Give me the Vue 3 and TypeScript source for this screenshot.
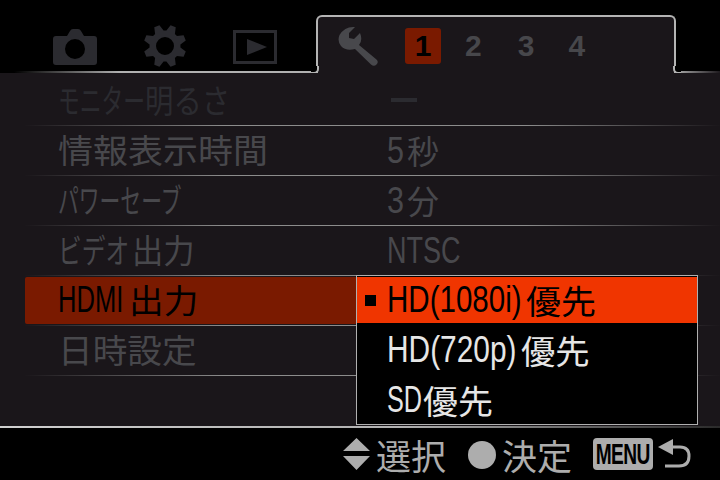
<script setup lang="ts">
interface Seg { t: string; w?: number; s?: number; latin?: boolean }
interface Row { id: string; label: Seg[]; value: Seg[]; dim?: boolean; active?: boolean; size?: string }

const rows: Row[] = [
  { id: 'a', dim: true, size: 'small', label: [{ t: 'モニター', w: 87, s: 0.66 }, { t: '明るさ', w: 82, s: 0.86 }], value: [] },
  { id: 'b', label: [{ t: '情報表示時間', w: 212, s: 1.06 }], value: [{ t: '5', latin: true, w: 20, s: 0.85 }, { t: '秒', w: 30, s: 0.97 }] },
  { id: 'c', size: 'small', label: [{ t: 'パワーセーブ', w: 122, s: 0.63 }], value: [{ t: '3', latin: true, w: 20, s: 0.85 }, { t: '分', w: 30, s: 0.97 }] },
  { id: 'd', label: [{ t: 'ビデオ', w: 74, s: 0.72 }, { t: '出力', w: 62, s: 0.95 }], value: [{ t: 'NTSC', latin: true, w: 73, s: 0.75 }] },
  { id: 'e', active: true, label: [{ t: 'HDMI', latin: true, w: 71, s: 0.71 }, { t: '出力', w: 68, s: 1.05 }], value: [] },
  { id: 'f', label: [{ t: '日時設定', w: 140, s: 1.05 }], value: [] },
]
const options: { id: string; label: Seg[]; selected?: boolean }[] = [
  { id: 'o1', selected: true, label: [{ t: 'HD(1080i)', latin: true, w: 139, s: 0.82 }, { t: '優先', w: 68, s: 1.06 }] },
  { id: 'o2', label: [{ t: 'HD(720p)', latin: true, w: 134, s: 0.83 }, { t: '優先', w: 66, s: 1.04 }] },
  { id: 'o3', label: [{ t: 'SD', latin: true, w: 36, s: 0.7 }, { t: '優先', w: 70, s: 1.06 }] },
]
const segStyle = (s: Seg) => (s.w ? { width: s.w + 'px', transform: `scaleX(${s.s})` } : {})

const gear = (() => {
  const pts: string[] = []
  const cx = 21, cy = 21
  for (let i = 0; i < 8; i++) {
    const a = ((i + 0.5) * Math.PI) / 4 - Math.PI / 2
    const p = (r: number, d: number) => `${(cx + r * Math.cos(a + d)).toFixed(2)} ${(cy + r * Math.sin(a + d)).toFixed(2)}`
    pts.push(p(15.5, -0.3), p(21.5, -0.13), p(21.5, 0.13), p(15.5, 0.3))
  }
  return `M${pts.join('L')}Z M${cx + 9} ${cy}A9 9 0 1 0 ${cx - 9} ${cy}A9 9 0 1 0 ${cx + 9} ${cy}Z`
})()
</script>

<template>
  <div class="screen">
    <header class="tabs">
      <div class="inactive">
        <svg class="i-camera" width="44" height="36" viewBox="0 0 44 36">
          <path fill-rule="evenodd" fill="#2b2b30" d="M3 7h11l3-5q1-2 3-2h5q2 0 3 2l3 5h10q3 0 3 3v23q0 3-3 3H3q-3 0-3-3V10q0-3 3-3ZM32 20a10 10 0 1 0-20 0a10 10 0 1 0 20 0Z" />
        </svg>
        <svg class="i-gear" width="42" height="42" viewBox="0 0 42 42"><path fill="#2b2b30" fill-rule="evenodd" :d="gear" /></svg>
        <svg class="i-play" width="44" height="34" viewBox="0 0 44 34">
          <rect x="1.5" y="1.500" width="41" height="31" fill="none" stroke="#2b2b30" stroke-width="3" />
          <path d="M14 9l20 8l-20 8Z" fill="#2b2b30" />
        </svg>
      </div>
      <div class="tab">
        <svg class="i-wrench" width="41" height="41" viewBox="0 0 41 41">
          <path fill="#48484c" d="M17 1L11 7L11 12L16 13L22 7Q25 14 21 19L38.500 33.500Q41 36 38.500 38.500Q36 41 33 38.500L17 23Q8 25.500 3 20Q-1 15 1.500 9Q7 0 17 1Z" />
        </svg>
        <span class="num on">1</span>
        <span class="num n2">2</span>
        <span class="num n3">3</span>
        <span class="num n4">4</span>
      </div>
      <div class="tail"></div>
    </header>

    <main class="panel">
      <div v-for="r in rows" :key="r.id" class="row" :class="{ dim: r.dim, active: r.active }">
        <div class="inner">
          <span class="label">
            <span v-for="s in r.label" :key="s.t" class="seg" :class="{ latin: s.latin }" :style="segStyle(s)">{{ s.t }}</span>
          </span>
          <span class="value">
            <span v-if="r.dim" class="dash"></span>
            <span v-for="s in r.value" :key="s.t" class="seg" :class="{ latin: s.latin }" :style="segStyle(s)">{{ s.t }}</span>
          </span>
        </div>
      </div>
      <div class="menu">
        <div v-for="o in options" :key="o.id" class="opt" :class="{ sel: o.selected }">
          <span class="mark"></span>
          <span v-for="s in o.label" :key="s.t" class="seg" :class="{ latin: s.latin }" :style="segStyle(s)">{{ s.t }}</span>
        </div>
      </div>
    </main>

    <footer class="foot">
      <svg class="updown" width="27" height="32" viewBox="0 0 27 32">
        <path d="M13.500 0L27 13H0Z M0 18H27L13.500 32Z" fill="#adadad" />
      </svg>
      <span class="ft">選択</span>
      <span class="dot"></span>
      <span class="ft">決定</span>
      <span class="menu-key"><span class="menu-text">MENU</span></span>
      <svg class="ret" width="34" height="32" viewBox="0 0 34 32">
        <path d="M1 9L16 1V17Z" fill="#adadad" />
        <path d="M12 9H23Q32 9 32 18Q32 28 22 28H8" fill="none" stroke="#adadad" stroke-width="3" />
      </svg>
    </footer>
  </div>
</template>

<style scoped>
.screen {
  width: 720px;
  height: 480px;
  background: #000;
  display: flex;
  flex-direction: column;
  overflow: hidden;
  font-family: "Noto Sans CJK JP", "Liberation Sans", sans-serif;
}
.tabs {
  height: 73px;
  display: flex;
  flex: none;
}
.inactive {
  width: 316px;
  flex: none;
  display: flex;
  align-items: flex-start;
  position: relative;
  border-bottom: 2px solid transparent;
  border-image: linear-gradient(90deg, #000 15px, #b0b0b0 120px) 1;
}
.i-camera { margin: 29px 0 0 53px; }
.i-gear { margin: 25px 0 0 47px; }
.i-play { margin: 30px 0 0 47px; }
.tab {
  width: 360px;
  height: 59px;
  margin-top: 15px;
  flex: none;
  box-sizing: border-box;
  background: #1a161a;
  border: 2px solid #b4b4b4;
  border-bottom: 0;
  border-radius: 6px 6px 0 0;
  display: flex;
  align-items: flex-start;
  padding: 9px 0 0 20px;
  position: relative;
}
.tab::before, .tab::after {
  content: "";
  position: absolute;
  bottom: 0;
  width: 6px;
  height: 6px;
  border-bottom: 2px solid #b4b4b4;
}
.tab::before { left: -7px; border-right: 2px solid #b4b4b4; border-bottom-right-radius: 5px; background: #000; }
.tab::after { right: -7px; border-left: 2px solid #b4b4b4; border-bottom-left-radius: 5px; background: #000; }
.tail {
  flex: 1;
  border-bottom: 2px solid transparent;
  border-image: linear-gradient(90deg, #b0b0b0, #1a161a) 1;
}
.num {
  font-family: "Liberation Sans", sans-serif;
  font-weight: 700;
  font-size: 30px;
  line-height: 36px;
  height: 36px;
  margin-top: 2px;
  color: #47474b;
  text-align: center;
}
.num.on {
  width: 36px;
  margin-left: 26px;
  background: #7a1a00;
  color: #000;
  border-radius: 3px;
}
.n2 { margin-left: 24px; }
.n3 { margin-left: 36px; }
.n4 { margin-left: 34px; }
.panel {
  position: relative;
  flex: none;
  height: 353px;
  background: #1a161a;
  box-sizing: border-box;
  padding: 3px 0 0 25px;
}
.row {
  height: 50px;
  box-sizing: border-box;
  border-bottom: 1px solid transparent;
  border-image: linear-gradient(90deg, #1a161a, #8c8c8c 200px, #8c8c8c 500px, #1a161a) 1;
  padding-top: 1px;
}
.inner {
  height: 47px;
  display: flex;
  align-items: center;
  color: #48484c;
  font-size: 33px;
  line-height: 45px;
  white-space: nowrap;
  border-radius: 2px;
}
.active .inner { background: #7a1a00; color: #000; width: 332px; }
.dim .inner { color: #2b2b30; }
.label {
  width: 362px;
  height: 47px;
  box-sizing: border-box;
  padding-left: 33px;
  flex: none;
  display: inline-flex;
}
.value { display: inline-flex; align-items: center; height: 47px; }
.dash { width: 26px; height: 4px; background: #2b2b30; margin: 0 0 2px 4px; }
.seg { display: inline-block; transform-origin: left center; white-space: nowrap; }
.latin { font-family: "Liberation Sans", sans-serif; font-size: 36px; }
.menu {
  position: absolute;
  left: 356px;
  top: 202px;
  width: 342px;
  height: 150px;
  box-sizing: border-box;
  background: #000;
  border: 1px solid #b0b0b0;
  padding-top: 1px;
  color: #e6e6e6;
  font-size: 33px;
}
.opt {
  height: 50px;
  line-height: 46px;
  padding-left: 30px;
  display: flex;
  white-space: nowrap;
  position: relative;
}
.opt.sel { background: #f03500; color: #000; height: 46px; margin-bottom: 4px; }
.mark { display: none; }
.sel .mark {
  display: block;
  position: absolute;
  left: 8px;
  top: 18px;
  width: 11px;
  height: 11px;
  background: #000;
}
.foot {
  flex: 1;
  display: flex;
  align-items: flex-start;
  color: #adadad;
  border-top: 2px solid transparent;
  border-image: linear-gradient(90deg, #d0d0d0, #b0b0b0 400px, #2a2a2a) 1;
  padding: 10px 0 0 343px;
}
.ft { font-size: 35px; line-height: 34px; margin-left: 6px; white-space: nowrap; }
.dot { width: 28px; height: 28px; border-radius: 50%; background: #adadad; margin: 3px 0 0 22px; flex: none; }
.menu-key {
  margin-left: 21px;
  width: 60px;
  height: 32px;
  flex: none;
  background: #adadad;
  color: #000;
  border-radius: 4px;
  display: flex;
  justify-content: center;
  overflow: hidden;
}
.menu-text {
  font: 700 29px/32px "Liberation Sans", sans-serif;
  transform: scaleX(0.66);
  letter-spacing: -1px;
}
.ret { margin-left: 4px; }
</style>
